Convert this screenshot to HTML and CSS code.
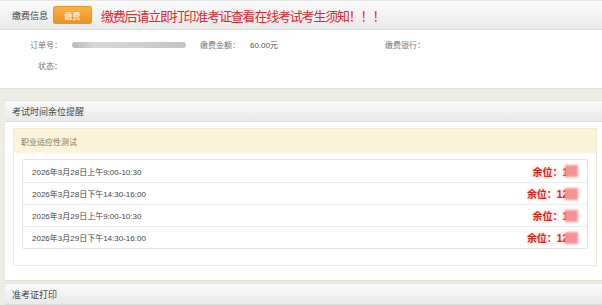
FILE: index.html
```html
<!DOCTYPE html>
<html lang="zh-CN">
<head>
    <meta charset="UTF-8">
    <title>缴费信息</title>
    <link rel="stylesheet" href="styles.css">
</head>
<body>
    <div class="box box-top">
        <div class="box-head">
            <span class="head-title">缴费信息</span>
            <button class="pay-btn">缴费</button>
            <span class="notice">缴费后请立即打印准考证查看在线考试考生须知！！！</span>
        </div>
        <div class="pay-info">
            <span class="lbl">订单号：</span>
            <span class="val"><i class="masked"></i></span>
            <span class="lbl">缴费金额：</span>
            <span class="val">60.00元</span>
            <span class="lbl">缴费银行：</span>
            <span class="val"></span>
            <span class="lbl">状态：</span>
            <span class="val"></span>
        </div>
    </div>

    <div class="box box-inner">
        <div class="box-head">考试时间余位提醒</div>
        <div class="box-body">
            <div class="panel">
                <div class="panel-head">职业适应性测试</div>
                <div class="panel-body">
                    <ul class="slot-list">
                        <li><span>2026年3月28日上午9:00-10:30</span><span class="left">余位：1<b class="mask"></b></span></li>
                        <li><span>2026年3月28日下午14:30-16:00</span><span class="left">余位：12<b class="mask"></b></span></li>
                        <li><span>2026年3月29日上午9:00-10:30</span><span class="left">余位：1<b class="mask"></b></span></li>
                        <li><span>2026年3月29日下午14:30-16:00</span><span class="left">余位：12<b class="mask"></b></span></li>
                    </ul>
                </div>
            </div>
        </div>
    </div>

    <div class="box box-inner box-last">
        <div class="box-head">准考证打印</div>
    </div>
</body>
</html>
```

FILE: styles.css
```css
* {
    margin: 0;
    padding: 0;
    box-sizing: border-box;
}

body {
    background: #eeede3;
    font-family: "Liberation Sans", "Noto Sans CJK SC", sans-serif;
    color: #333;
    overflow: hidden;
}

.box {
    background: #fff;
    border-bottom: 1px solid #e2e0d2;
}

.box-inner {
    margin-left: 5px;
    margin-top: 11px;
}

.box-last {
    margin-top: 2px;
}

.box-head {
    height: 22px;
    display: flex;
    align-items: center;
    padding-left: 7px;
    font-size: 9px;
    color: #444;
    background: linear-gradient(#fbfbfb, #e9e9e9);
    border-top: 1px solid #e4e4e4;
    border-bottom: 1px solid #dcdcdc;
}

.box-top .box-head {
    height: 30px;
    padding-left: 12px;
}

.head-title {
    width: 41px;
}

.pay-btn {
    width: 39px;
    height: 18px;
    border: 1px solid #e59a2e;
    border-radius: 2px;
    background: linear-gradient(#f9b146, #ec921e);
    color: #fff;
    font-family: inherit;
    font-size: 8px;
    margin-right: 9px;
}

.notice {
    font-size: 13px;
    letter-spacing: -1.2px;
    color: #e5262e;
}

.pay-info {
    display: grid;
    grid-template-columns: 62px 118px 40px 125px 45px 1fr;
    grid-auto-rows: 21px;
    column-gap: 10px;
    align-items: center;
    padding: 4px 0 12px;
    font-size: 8px;
    color: #666;
}

.lbl {
    text-align: right;
    white-space: nowrap;
    color: #777;
}

.pay-info .lbl:nth-child(5) {
    text-align: left;
}

.val {
    color: #555;
}

.masked {
    display: block;
    width: 114px;
    height: 6px;
    border-radius: 3px;
    background: linear-gradient(90deg, #bbb, #d6d6d6 20%, #cfcfcf 60%, #c4c4c4);
    filter: blur(0.7px);
}

.box-body {
    padding: 6px 5px 14px 8px;
}

.panel {
    border: 1px solid #f1ead2;
    background: #fff;
}

.panel-head {
    height: 24px;
    display: flex;
    align-items: center;
    padding-left: 7px;
    font-size: 8px;
    color: #8a7450;
    background: #fcf4da;
}

.panel-body {
    padding: 6px 8px 16px;
}

.slot-list {
    list-style: none;
    border: 1px solid #e3e3e3;
    border-radius: 2px;
}

.slot-list li {
    height: 22px;
    display: flex;
    align-items: center;
    justify-content: space-between;
    padding: 0 9px 0 9px;
    font-size: 8px;
    color: #444;
    border-top: 1px solid #ececec;
}

.slot-list li:first-child {
    border-top: none;
}

.left {
    display: flex;
    align-items: center;
    font-size: 10px;
    font-weight: bold;
    color: #d8231c;
    text-shadow: 0 0 3px #ffcfc4, 0 0 5px #ffdcd4;
}

.mask {
    display: inline-block;
    width: 13px;
    height: 12px;
    background: #f59292;
    filter: blur(1px);
    margin-left: -3px;
}
```
